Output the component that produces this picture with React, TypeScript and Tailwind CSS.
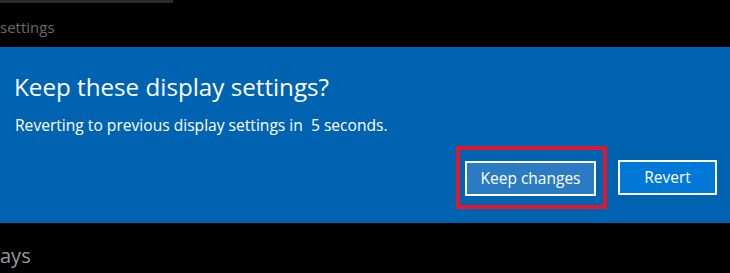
export default function App() {
  return (
    <div className="w-[730px] h-[273px] bg-black overflow-hidden flex flex-col font-['Open_Sans',sans-serif]">
      <div className="h-[47px] shrink-0">
        <div className="h-[3px] w-[173px] bg-[#2b2b2b]" />
        <p className="mt-[14px] text-[15px] leading-[20px] text-[#6a6a6a]">settings</p>
      </div>
      <div className="h-[176px] shrink-0 bg-[#0063b1] flex flex-col">
        <h1 className="mt-[25px] ml-[14px] text-[24.2px] leading-[30px] text-white">Keep these display settings?</h1>
        <p className="mt-[13px] ml-[15px] text-[15.6px] leading-[20px] text-white">
          Reverting to previous display settings in&nbsp; 5 seconds.
        </p>
        <div className="flex justify-end items-center mt-[11px] pr-[13px] gap-[11px]">
          <div className="border-4 border-[#e0182d] pl-[5px] pr-[7px] pt-[11px] pb-[9px]">
            <button className="w-[131px] h-[35px] border-2 border-white bg-[#2b7bc2] text-white text-[15.5px]">
              Keep changes
            </button>
          </div>
          <button className="w-[99px] h-[35px] border-2 border-white bg-[#0078d7] text-white text-[15.5px]">
            Revert
          </button>
        </div>
      </div>
      <p className="mt-[20px] text-[20px] leading-[26px] text-[#9a9a9a]">ays</p>
    </div>
  );
}
